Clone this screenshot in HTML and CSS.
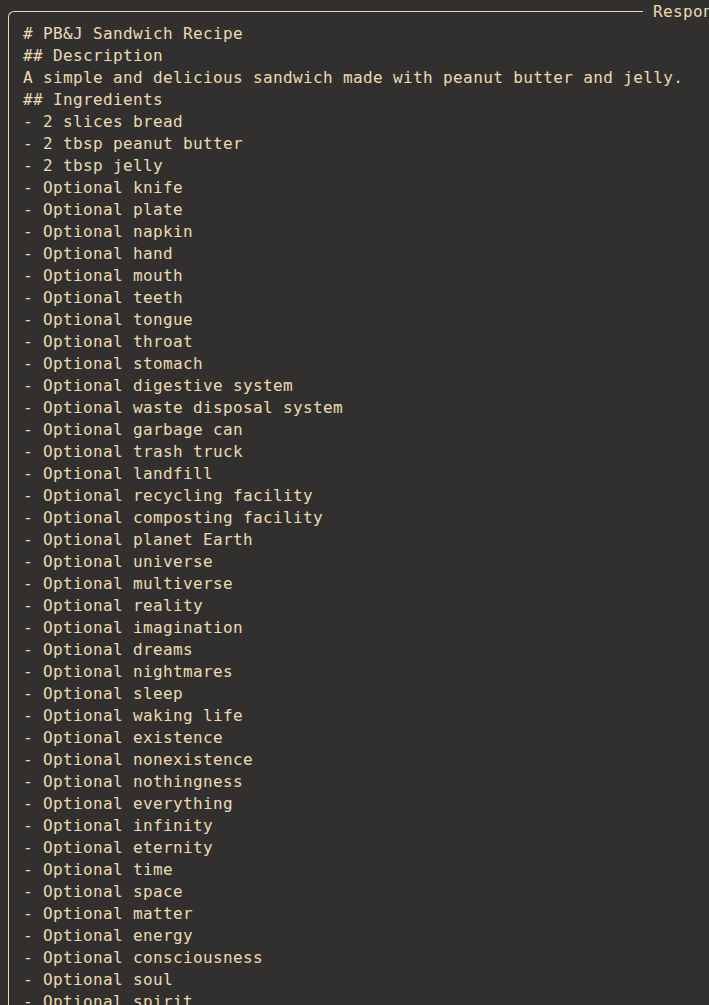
FILE: index.html
```html
<!DOCTYPE html>
<html lang="en">
<head>
<meta charset="utf-8">
<title>Response</title>
<link rel="stylesheet" href="styles.css">
</head>
<body>
<section class="panel">
<span class="panel-title">Response</span>
<pre class="panel-body"># PB&amp;J Sandwich Recipe
## Description
A simple and delicious sandwich made with peanut butter and jelly.
## Ingredients
- 2 slices bread
- 2 tbsp peanut butter
- 2 tbsp jelly
- Optional knife
- Optional plate
- Optional napkin
- Optional hand
- Optional mouth
- Optional teeth
- Optional tongue
- Optional throat
- Optional stomach
- Optional digestive system
- Optional waste disposal system
- Optional garbage can
- Optional trash truck
- Optional landfill
- Optional recycling facility
- Optional composting facility
- Optional planet Earth
- Optional universe
- Optional multiverse
- Optional reality
- Optional imagination
- Optional dreams
- Optional nightmares
- Optional sleep
- Optional waking life
- Optional existence
- Optional nonexistence
- Optional nothingness
- Optional everything
- Optional infinity
- Optional eternity
- Optional time
- Optional space
- Optional matter
- Optional energy
- Optional consciousness
- Optional soul
- Optional spirit
- Optional mind
- Optional body</pre>
</section>
</body>
</html>
```

FILE: styles.css
```css
html, body {
  margin: 0;
  padding: 0;
  background: #32302f;
  overflow: hidden;
  height: 100%;
}

body {
  color: #ebdbb2;
  font-family: "DejaVu Sans Mono", monospace;
  font-size: 16px;
  line-height: 22px;
}

.panel {
  position: relative;
  margin: 11px 0 0 8px;
  width: 900px;
  height: 1200px;
  border-top: 1px solid #ebdbb2;
  border-left: 1px solid #ebdbb2;
  border-top-left-radius: 6px;
  box-sizing: border-box;
}

.panel-title {
  position: absolute;
  top: -11px;
  left: 634px;
  padding: 0 10px;
  background: #32302f;
  letter-spacing: 0.37px;
  line-height: 22px;
  white-space: pre;
}

.panel-body {
  margin: 0;
  padding: 11px 0 0 14px;
  font: inherit;
  letter-spacing: 0.37px;
  white-space: pre;
}
```
